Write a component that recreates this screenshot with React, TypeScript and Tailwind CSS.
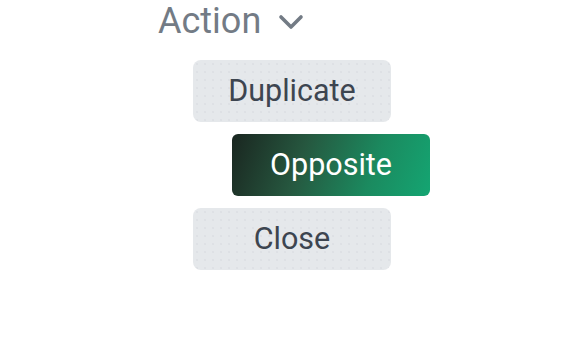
import React from "react";

const dots =
  "bg-[radial-gradient(circle,rgba(156,163,175,0.22)_0.6px,transparent_0.8px)] bg-[length:8px_8px]";

export default function App() {
  return (
    <div className="w-[570px] h-[363px] bg-white font-['Roboto',sans-serif] relative overflow-hidden">
      <div className="pl-[158px] pt-[0px] flex flex-col items-start">
        <button className="flex items-center gap-[17px] text-[36px] leading-[42px] text-[#737b85]">
          <span>Action</span>
          <svg width="26" height="18" viewBox="0 0 26 18" fill="none" stroke="currentColor" strokeWidth="3.6" strokeLinecap="round" strokeLinejoin="round" className="mt-[2px]">
            <path d="M3 4l10 10 10-10" />
          </svg>
        </button>
        <div className="flex flex-col items-start gap-[12px] mt-[18px] ml-[35px]">
          <button className={`w-[198px] h-[62px] rounded-[8px] bg-[#e5e8eb] ${dots} text-[30.5px] text-[#3d4550] flex items-center justify-center`}>
            Duplicate
          </button>
          <button className="ml-[39px] w-[198px] h-[62px] rounded-[6px] bg-[linear-gradient(110deg,#1a2620_0%,#26573f_35%,#1b8a5f_70%,#14a572_100%)] text-[30.5px] text-white flex items-center justify-center">
            Opposite
          </button>
          <button className={`w-[198px] h-[62px] rounded-[8px] bg-[#e5e8eb] ${dots} text-[30.5px] text-[#3d4550] flex items-center justify-center`}>
            Close
          </button>
        </div>
      </div>
    </div>
  );
}
